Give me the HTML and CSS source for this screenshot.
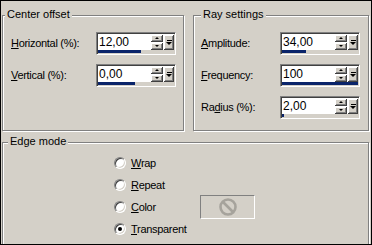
FILE: index.html
```html
<!DOCTYPE html>
<html>
<head>
<meta charset="utf-8">
<link rel="stylesheet" href="styles.css">
</head>
<body>
<div class="dialog">
  <div class="top">
    <section class="group g-center">
      <div class="legend">Center offset</div>
      <div class="rows">
        <div class="row">
          <span class="lbl"><u>H</u>orizontal (%):</span>
          <div class="spin">
            <div class="spin-main">
              <span class="val">12,00</span>
              <div class="ud"><span class="b up"></span><span class="b down"></span></div>
              <span class="b drop"></span>
            </div>
            <div class="track"><div class="fill" style="width:43px"></div></div>
          </div>
        </div>
        <div class="row">
          <span class="lbl"><u>V</u>ertical (%):</span>
          <div class="spin">
            <div class="spin-main">
              <span class="val">0,00</span>
              <div class="ud"><span class="b up"></span><span class="b down"></span></div>
              <span class="b drop"></span>
            </div>
            <div class="track"><div class="fill" style="width:37px"></div></div>
          </div>
        </div>
      </div>
    </section>
    <section class="group g-ray">
      <div class="legend">Ray settings</div>
      <div class="rows">
        <div class="row">
          <span class="lbl"><u>A</u>mplitude:</span>
          <div class="spin">
            <div class="spin-main">
              <span class="val">34,00</span>
              <div class="ud"><span class="b up"></span><span class="b down"></span></div>
              <span class="b drop"></span>
            </div>
            <div class="track"><div class="fill" style="width:24px"></div></div>
          </div>
        </div>
        <div class="row">
          <span class="lbl"><u>F</u>requency:</span>
          <div class="spin">
            <div class="spin-main">
              <span class="val">100</span>
              <div class="ud"><span class="b up"></span><span class="b down"></span></div>
              <span class="b drop"></span>
            </div>
            <div class="track"><div class="fill" style="width:100%"></div></div>
          </div>
        </div>
        <div class="row">
          <span class="lbl">Ra<u>d</u>ius (%):</span>
          <div class="spin">
            <div class="spin-main">
              <span class="val">2,00</span>
              <div class="ud"><span class="b up"></span><span class="b down"></span></div>
              <span class="b drop"></span>
            </div>
            <div class="track"><div class="fill" style="width:2px"></div></div>
          </div>
        </div>
      </div>
    </section>
  </div>
  <section class="group g-edge">
    <div class="legend">Edge mode</div>
    <div class="radios">
      <div class="radio-row"><span class="radio"></span><span class="rlbl"><u>W</u>rap</span></div>
      <div class="radio-row"><span class="radio"></span><span class="rlbl"><u>R</u>epeat</span></div>
      <div class="radio-row color-row">
        <span class="rcell"><span class="radio"></span><span class="rlbl"><u>C</u>olor</span></span>
        <span class="swatch">
          <svg width="22" height="22" viewBox="0 0 22 22"><circle cx="11" cy="11" r="7.5" fill="none" stroke="#a6a39c" stroke-width="2.6"/><line x1="6" y1="6" x2="16" y2="16" stroke="#a6a39c" stroke-width="2.6"/></svg>
        </span>
      </div>
      <div class="radio-row"><span class="radio checked"></span><span class="rlbl"><u>T</u>ransparent</span></div>
    </div>
  </section>
</div>
</body>
</html>
```

FILE: styles.css
```css
html, body {
  margin: 0;
  padding: 0;
  background: #d4d0c8;
}
.dialog {
  width: 372px;
  height: 245px;
  box-sizing: border-box;
  border: 1px solid #000;
  background: #d4d0c8;
  padding: 14px 2px 0 1px;
  overflow: hidden;
  font-family: "Liberation Sans", Arial, sans-serif;
  font-size: 11px;
  color: #000;
}
.top {
  display: flex;
  gap: 9px;
}
.group {
  box-sizing: border-box;
  border: 1px solid #808080;
  box-shadow: inset 1px 1px #fff, 1px 1px #fff;
  display: flex;
  flex-direction: column;
}
.g-center { width: 182px; height: 116px; padding: 0 7px 0 8px; }
.g-ray { width: 176px; height: 116px; padding: 0 8px 0 7px; }
.g-edge { margin-top: 11px; height: 110px; padding: 0; }
.legend {
  align-self: flex-start;
  margin: -8px 0 0 2px;
  padding: 0 2px;
  line-height: 13px;
  background: #d4d0c8;
  position: relative;
}
.g-center .legend { margin-left: -6px; }
.g-ray .legend { margin-left: 0; }
.g-edge .legend { margin-left: 5px; }
.rows {
  margin-top: 11px;
  display: flex;
  flex-direction: column;
  gap: 9px;
}
.row {
  display: flex;
  align-items: center;
  justify-content: space-between;
  height: 23px;
}
.lbl { line-height: 13px; letter-spacing: -0.3px; }
.spin {
  width: 80px;
  height: 23px;
  box-sizing: border-box;
  border: 1px solid;
  border-color: #808080 #fff #fff #808080;
  box-shadow: inset 1px 1px #404040, inset -1px -1px #d4d0c8;
  background: #fff;
  padding: 1px;
  display: flex;
  flex-direction: column;
}
.spin-main {
  height: 16px;
  display: flex;
  align-items: stretch;
}
.val {
  flex: 1;
  font-size: 12px;
  line-height: 16px;
  padding-left: 1px;
}
.ud {
  width: 12px;
  display: flex;
  flex-direction: column;
  gap: 1px;
  margin-right: 1px;
  padding-top: 1px;
}
.b {
  box-sizing: border-box;
  background: #d4d0c8;
  box-shadow: inset -1px -1px #404040, inset 1px 1px #fff, inset -2px -2px #808080;
  display: flex;
  align-items: center;
  justify-content: center;
  position: relative;
}
.up, .down { height: 7px; }
.up::after {
  content: "";
  border-left: 2px solid transparent;
  border-right: 2px solid transparent;
  border-bottom: 2px solid #000;
  margin-top: -1px;
}
.down::after {
  content: "";
  border-left: 2px solid transparent;
  border-right: 2px solid transparent;
  border-top: 2px solid #000;
  margin-top: -1px;
}
.drop {
  width: 10px;
  flex-direction: column;
  gap: 1px;
  margin-top: 1px;
}
.drop::before {
  content: "";
  width: 5px;
  height: 1px;
  background: #000;
}
.drop::after {
  content: "";
  border-left: 3px solid transparent;
  border-right: 3px solid transparent;
  border-top: 3px solid #000;
}
.track {
  height: 3px;
  background: #d4d0c8;
}
.fill {
  height: 3px;
  background: #0a246a;
}
.radios {
  margin-top: 4px;
  padding-left: 111px;
  display: flex;
  flex-direction: column;
}
.radio-row {
  height: 22px;
  display: flex;
  align-items: center;
}
.rcell {
  width: 86px;
  display: flex;
  align-items: center;
}
.radio {
  width: 12px;
  height: 12px;
  box-sizing: border-box;
  border-radius: 50%;
  border: 1px solid;
  border-color: #808080 #fff #fff #808080;
  box-shadow: inset 1px 1px #404040, inset -1px -1px #d4d0c8;
  background: #fff;
  display: flex;
  align-items: center;
  justify-content: center;
  flex: none;
}
.radio.checked::after {
  content: "";
  width: 4px;
  height: 4px;
  border-radius: 50%;
  background: #000;
}
.rlbl {
  margin-left: 5px;
  line-height: 13px;
  letter-spacing: -0.3px;
}
.swatch {
  width: 55px;
  height: 24px;
  box-sizing: border-box;
  border: 1px solid;
  border-color: #808080 #fff #fff #808080;
  display: flex;
  align-items: center;
  justify-content: center;
  flex: none;
}
```
